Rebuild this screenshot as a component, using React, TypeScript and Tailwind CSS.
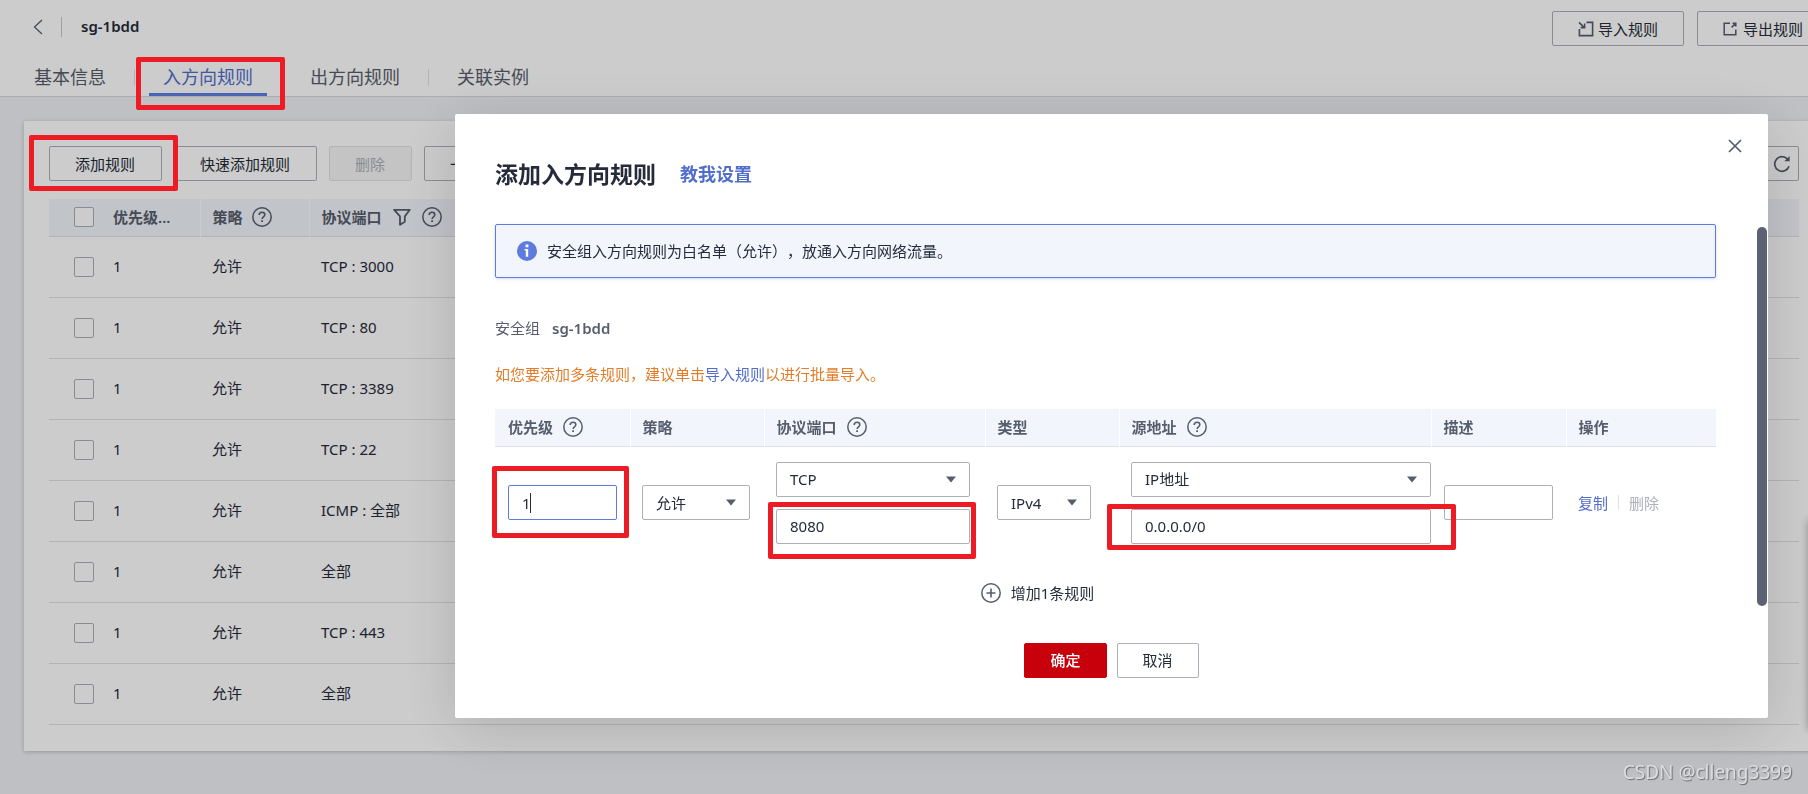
import { useState } from "react";

const RULES = [
  "TCP : 3000",
  "TCP : 80",
  "TCP : 3389",
  "TCP : 22",
  "ICMP : 全部",
  "全部",
  "TCP : 443",
  "全部",
];

const inputBase = "h-[35px] w-full rounded-xs border bg-white px-[13px] text-[15px] text-[#252b3a] outline-none";
const inputClass = `${inputBase} border-[#adb0b8]`;
const buttonBase = "h-[35px] rounded-xs border text-[15px] leading-5 whitespace-nowrap";
const buttonClass = `${buttonBase} border-[#adb0b8] text-[#252b3a]`;

function HelpIcon() {
  return (
    <svg className="h-5 w-5 shrink-0" viewBox="0 0 20 20" fill="none" stroke="#575d6c">
      <circle cx="10" cy="10" r="9.2" strokeWidth="1.5" />
      <path d="M7.2 8.1c0-1.7 1.2-2.8 2.8-2.8s2.8 1 2.8 2.5c0 2-2.7 2.1-2.7 4.3" strokeWidth="1.6" />
      <path d="M10.1 13.2v1.8" strokeWidth="1.8" />
    </svg>
  );
}

function FilterIcon() {
  return (
    <svg className="h-[18px] w-[18px] shrink-0" viewBox="0 0 18 18" fill="none" stroke="#575d6c" strokeWidth="1.8">
      <path d="M1.2 1.8h15.6l-5 6.6v5.4l-4.8 3V8.4z" strokeLinejoin="round" />
    </svg>
  );
}

function ImportIcon() {
  return (
    <svg className="h-4 w-4 shrink-0" viewBox="0 0 16 16" fill="none" stroke="#575d6c" strokeWidth="1.6">
      <path d="M8.5 1.4h6.1v13.2H1.4V8" />
      <path d="M1 1.4l5 5" />
      <path d="M6.6 2.6v4h-4" />
    </svg>
  );
}

function ExportIcon() {
  return (
    <svg className="h-[14px] w-[14px] shrink-0" viewBox="0 0 14 14" fill="none" stroke="#575d6c" strokeWidth="1.5">
      <path d="M7 1.2H1.2v11.6h11.6V7.5" />
      <path d="M8.6 5.4l4-4M9.6 1.2h3.2v3.2" />
    </svg>
  );
}

// Red frame drawn over the step the reader has to look at
function Mark({ className }: { className: string }) {
  return <span className={`pointer-events-none absolute z-30 rounded-xs border-[5px] border-[#ed1c24] ${className}`} />;
}

function Select({ label, value }: { label: string; value: string }) {
  return (
    <div className="relative">
      <select aria-label={label} defaultValue={value} className={`${inputClass} appearance-none`}>
        <option>{value}</option>
      </select>
      <svg className="pointer-events-none absolute top-[14px] right-[14px] h-[7px] w-[10px]" viewBox="0 0 10 7" fill="#575d6c">
        <path d="M0 .5h10L5 6.5z" />
      </svg>
    </div>
  );
}

function Header() {
  return (
    <header className="flex h-[97px] justify-between border-b border-[#d5d8df] bg-white pr-[19px]">
      <div>
        <div className="flex h-[53px] items-center pl-[33px]">
          <button aria-label="返回">
            <svg className="h-4 w-[10px]" viewBox="0 0 10 16" fill="none" stroke="#575d6c" strokeWidth="1.3">
              <path d="M9 1L1.5 8 9 15" />
            </svg>
          </button>
          <span className="ml-[18px] h-5 w-px bg-[#c6c9d0]" />
          <h1 className="ml-[19px] text-[15px] font-semibold">sg-1bdd</h1>
        </div>
        <nav className="flex h-[43px] pl-5 text-[18px] leading-[48px] text-[#575d6c]">
          <a href="#info" className="px-[14px]">基本信息</a>
          <span className="mx-[14px] mt-4 h-[17px] w-px bg-[#dfe1e6]" />
          <a href="#inbound" className="relative border-b-[3px] border-[#5e7ce0] px-[14px] text-[#526ecc]">
            入方向规则
            <Mark className="top-1 -right-[18px] -bottom-[17px] -left-[13px]" />
          </a>
          <span className="mx-[14px] mt-4 h-[17px] w-px bg-[#dfe1e6]" />
          <a href="#outbound" className="px-[14px]">出方向规则</a>
          <span className="mx-[14px] mt-4 h-[17px] w-px bg-[#dfe1e6]" />
          <a href="#instances" className="px-[14px]">关联实例</a>
        </nav>
      </div>
      <div className="flex gap-[13px] pt-[11px]">
        <button className={`${buttonClass} flex items-center gap-1 px-[25px]`}>
          <ImportIcon />
          导入规则
        </button>
        <button className={`${buttonClass} flex items-center gap-[6px] px-[25px]`}>
          <ExportIcon />
          导出规则
        </button>
      </div>
    </header>
  );
}

function Checkbox({ label }: { label: string }) {
  return (
    <input
      type="checkbox"
      aria-label={label}
      className="block h-5 w-5 appearance-none rounded-xs border border-[#adb0b8] bg-white"
    />
  );
}

function RuleList() {
  return (
    <main className="mx-6 mt-6 bg-white px-[25px] pt-[25px] pb-[26px] shadow-[0_1px_4px_rgba(0,0,0,0.2)]">
      <div className="flex gap-3">
        <div className="relative">
          <button className={`${buttonClass} pr-[26px] pl-[25px]`}>添加规则</button>
          <Mark className="-top-[11px] -right-4 -bottom-[10px] -left-5" />
        </div>
        <button className={`${buttonClass} pr-[26px] pl-[25px]`}>快速添加规则</button>
        <button disabled className={`${buttonBase} border-[#dfe1e6] bg-[#f5f5f6] pr-[26px] pl-[25px] text-[#adb0b8]`}>
          删除
        </button>
        <button className={`${buttonClass} pr-[26px] pl-[25px]`}>一键</button>
        <button aria-label="刷新" className={`${buttonClass} ml-auto flex w-[35px] items-center justify-center`}>
          <svg className="h-[18px] w-[18px]" viewBox="0 0 18 18" fill="none" stroke="#575d6c" strokeWidth="1.7">
            <path d="M16 11.2A7.3 7.3 0 1 1 15 4.8" />
            <path d="M16.6 1v5.2h-5.2z" fill="#575d6c" stroke="none" />
          </svg>
        </button>
      </div>

      <table className="mt-[18px] w-full table-fixed text-left text-[15px]">
        <colgroup>
          <col className="w-[52px]" />
          <col className="w-[99px]" />
          <col className="w-[109px]" />
          <col />
        </colgroup>
        <thead>
          <tr className="h-[37px] border-b border-[#dfe1e6] bg-[#f2f5fc] text-[#575d6c]">
            <th className="pl-[25px]"><Checkbox label="全选" /></th>
            <th className="border-r border-white pl-3 font-semibold">优先级...</th>
            <th className="border-r border-white pl-3 font-semibold">
              <div className="flex items-center gap-[9px]">策略<HelpIcon /></div>
            </th>
            <th className="pl-3 font-semibold">
              <div className="flex items-center gap-[11px]">协议端口<FilterIcon /><HelpIcon /></div>
            </th>
          </tr>
        </thead>
        <tbody>
          {RULES.map((port, i) => (
            <tr key={i} className="h-[61px] border-b border-[#dfe1e6]">
              <td className="pl-[25px]"><Checkbox label={`选择规则 ${i + 1}`} /></td>
              <td className="pl-3">1</td>
              <td className="pl-3">允许</td>
              <td className="pl-3">{port}</td>
            </tr>
          ))}
        </tbody>
      </table>
    </main>
  );
}

function AddRuleDialog() {
  const [priority, setPriority] = useState("1");
  const [port, setPort] = useState("8080");
  const [source, setSource] = useState("0.0.0.0/0");
  const [desc, setDesc] = useState("");

  const thClass = "border-r border-white pl-3 font-semibold first:pl-[13px] last:border-r-0";

  return (
    <section
      role="dialog"
      aria-label="添加入方向规则"
      className="relative mt-[114px] mr-10 ml-[455px] flex-1 rounded-xs bg-white pt-[45px] pr-[52px] pb-10 pl-10 text-[15px] leading-5 shadow-[0_10px_60px_rgba(0,0,0,0.15)]"
    >
      <button aria-label="关闭" className="absolute top-[25px] right-[26px]">
        <svg className="h-[14px] w-[14px]" viewBox="0 0 14 14" stroke="#575d6c" strokeWidth="1.7">
          <path d="M1 1l12 12M13 1L1 13" />
        </svg>
      </button>
      <div className="absolute top-[113px] right-px h-[379px] w-[10px] rounded-full bg-[#5c6173]" />

      <div className="flex h-[30px] items-center gap-6">
        <h2 className="text-[23px] font-bold">添加入方向规则</h2>
        <a href="#guide" className="text-[18px] font-bold text-[#526ecc]">教我设置</a>
      </div>

      <div className="mt-[35px] flex h-[54px] items-center gap-[10px] rounded-xs border border-[#5e7ce0] bg-[#f2f5fc] pl-[21px] shadow-[0_1px_3px_rgba(94,124,224,0.3)]">
        <svg className="h-5 w-5" viewBox="0 0 20 20">
          <circle cx="10" cy="10" r="10" fill="#5e7ce0" />
          <path d="M8.6 3.6h2.8v2.6H8.6zM7.6 8h3.6v7.8H8.8V9.6H7.6z" fill="#fff" />
        </svg>
        <p className="[text-spacing-trim:space-all]">安全组入方向规则为白名单（允许），放通入方向网络流量。</p>
      </div>

      <p className="mt-10 text-[#575d6c]">
        安全组<strong className="ml-3 font-semibold">sg-1bdd</strong>
      </p>
      <p className="mt-[26px] text-[#e37d29]">
        如您要添加多条规则，建议单击<a href="#import" className="text-[#526ecc]">导入规则</a>以进行批量导入。
      </p>

      <table className="mt-[25px] w-full table-fixed text-left">
        <colgroup>
          <col className="w-[135px]" />
          <col className="w-[134px]" />
          <col className="w-[221px]" />
          <col className="w-[134px]" />
          <col />
          <col className="w-[135px]" />
          <col className="w-[150px]" />
        </colgroup>
        <thead>
          <tr className="h-[37px] border-b border-[#dfe1e6] bg-[#f2f5fc] text-[#575d6c]">
            <th className={thClass}><div className="flex items-center gap-[10px]">优先级<HelpIcon /></div></th>
            <th className={thClass}>策略</th>
            <th className={thClass}><div className="flex items-center gap-[10px]">协议端口<HelpIcon /></div></th>
            <th className={thClass}>类型</th>
            <th className={thClass}><div className="flex items-center gap-[10px]">源地址<HelpIcon /></div></th>
            <th className={thClass}>描述</th>
            <th className={thClass}>操作</th>
          </tr>
        </thead>
        <tbody>
          <tr>
            <td className="px-[13px] pt-[15px]">
              <div className="relative">
                <input
                  aria-label="优先级"
                  value={priority}
                  onChange={(e) => setPriority(e.target.value)}
                  className={`${inputBase} border-[#5e7ce0]`}
                />
                <span className="absolute top-2 left-[22px] h-5 w-px bg-[#252b3a]" />
                <Mark className="-top-[19px] -right-3 -bottom-[18px] -left-4" />
              </div>
            </td>
            <td className="pt-[15px] pr-[14px] pl-3"><Select label="策略" value="允许" /></td>
            <td className="pt-[15px] pr-[15px] pl-3">
              <Select label="协议" value="TCP" />
              <div className="relative mt-3">
                <input
                  aria-label="端口"
                  value={port}
                  onChange={(e) => setPort(e.target.value)}
                  className={inputClass}
                />
                <Mark className="-top-[7px] -right-[6px] -bottom-[15px] -left-2" />
              </div>
            </td>
            <td className="pt-[15px] pr-7 pl-3"><Select label="类型" value="IPv4" /></td>
            <td className="pt-[15px] pl-3">
              <Select label="源地址类型" value="IP地址" />
              <div className="relative mt-3">
                <input
                  aria-label="源地址"
                  value={source}
                  onChange={(e) => setSource(e.target.value)}
                  className={inputClass}
                />
                <Mark className="-top-[5px] -right-[25px] -bottom-[6px] -left-6" />
              </div>
            </td>
            <td className="px-[13px] pt-[15px]">
              <input aria-label="描述" value={desc} onChange={(e) => setDesc(e.target.value)} className={inputClass} />
            </td>
            <td className="pt-[15px] pl-3">
              <div className="flex items-center">
                <button className="text-[#526ecc]">复制</button>
                <span className="mx-[10px] h-[15px] w-px bg-[#dfe1e6]" />
                <button disabled className="text-[#adb0b8]">删除</button>
              </div>
            </td>
          </tr>
        </tbody>
      </table>

      <div className="mt-[39px] flex justify-center pr-[136px]">
        <button className="flex h-5 items-center gap-[10px]">
          <svg className="h-5 w-5" viewBox="0 0 20 20" fill="none" stroke="#575d6c">
            <circle cx="10" cy="10" r="9.2" strokeWidth="1.5" />
            <path d="M10 5.5v9M5.5 10h9" strokeWidth="1.6" />
          </svg>
          增加1条规则
        </button>
      </div>

      <div className="mt-10 -mr-3 flex justify-center gap-[10px]">
        <button className={`${buttonBase} border-[#c7000b] bg-[#c7000b] px-[25px] font-medium text-white`}>确定</button>
        <button className={`${buttonClass} px-[25px]`}>取消</button>
      </div>
    </section>
  );
}

export default function App() {
  return (
    <div className="relative h-screen overflow-hidden bg-[#eef0f5] font-['Noto_Sans','Noto_Sans_CJK_SC',sans-serif] text-[#252b3a]">
      <div className="w-[calc(100%+40px)]">
        <Header />
        <RuleList />
      </div>
      <div className="fixed top-[520px] -right-10 h-[210px] w-10 shadow-[0_0_8px_rgba(0,0,0,0.3)]" />

      <div className="fixed inset-0 z-20 flex items-start bg-black/20">
        <AddRuleDialog />
      </div>

      <p className="fixed right-4 bottom-2 z-40 text-[19px] leading-7 text-[#dcdde0] [text-shadow:1px_1px_1px_#6b6c70]">
        CSDN @clleng3399
      </p>
    </div>
  );
}
